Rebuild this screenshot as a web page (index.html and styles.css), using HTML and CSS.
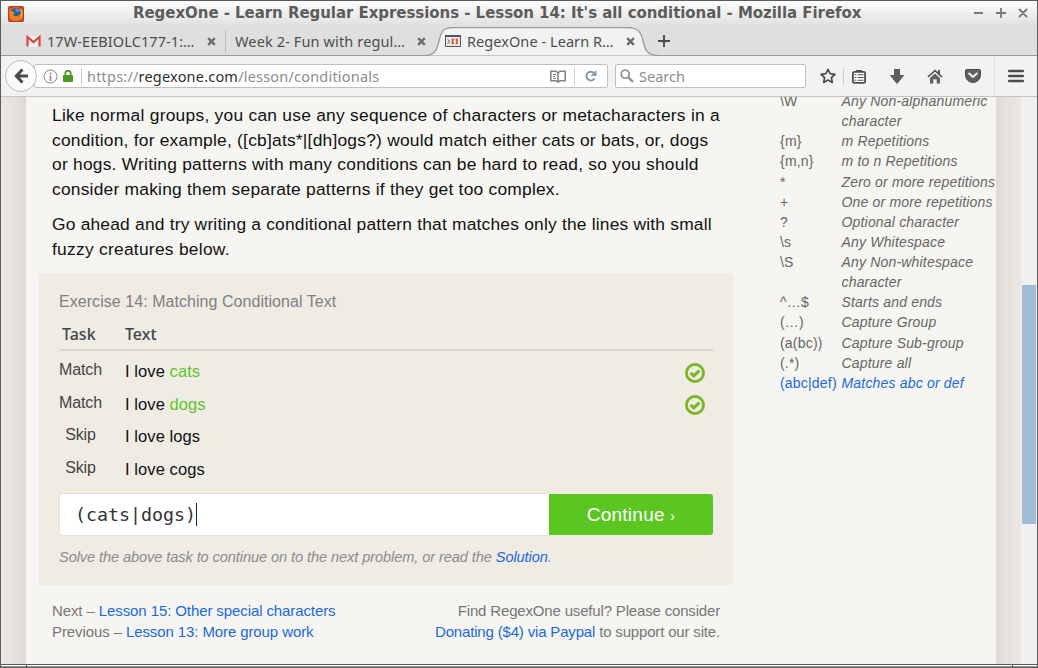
FILE: index.html
```html
<!DOCTYPE html>
<html lang="en">
<head>
<meta charset="utf-8">
<title>RegexOne - Learn Regular Expressions - Lesson 14: It's all conditional</title>
<link rel="stylesheet" href="styles.css">
</head>
<body>
<div class="window">
  <header class="titlebar">
    <svg class="app-icon" width="16" height="16" viewBox="0 0 16 16">
      <rect x=".5" y=".5" width="15" height="15" rx="1" fill="#c94f20" stroke="#a8401e"/>
      <path d="M1 3 8 1l7 2v10l-5 2H4l-3-3z" fill="#e8681c"/>
      <circle cx="8" cy="7.5" r="5.6" fill="#275f9c"/>
      <path d="M8 2.500c2 0 4 1.500 4.500 3L9 6 7 4z" fill="#4a9ed6"/>
      <path d="M2 3c0 2 1 2 3 2.500L7 7 5 8.500c1 2 4 2.500 6 .5 2-1 2-4 1-6 3 2 3 8 0 10.500-3 2-8 1-10-2-1-3-1-6 0-8.500z" fill="#f08020"/>
      <path d="M12 2c3 3 3 7 1 10 0-3 1-6-1-10z" fill="#f8bc38"/>
    </svg>
    <h1 class="window-title">RegexOne - Learn Regular Expressions - Lesson 14: It's all conditional - Mozilla Firefox</h1>
    <svg class="window-controls" width="56" height="12" viewBox="0 0 56 12" fill="none" stroke="#777" stroke-width="1.8">
      <path d="M1 6h9M23 6h10M28 1v10M46 2l8 8M54 2l-8 8"/>
    </svg>
  </header>

  <nav class="tabs">
    <div class="tab tab-mail">
      <svg width="15" height="12" viewBox="0 0 15 12"><path d="M1 1h13v11H1z" fill="#eee"/><path d="M1.500 11.500V2l6 5 6-5v9.500" fill="none" stroke="#d5473c" stroke-width="2.200"/></svg>
      <span class="tab-label">17W-EEBIOLC177-1:…</span>
      <svg class="tab-close" width="9" height="9" viewBox="0 0 9 9"><path d="m1.200 1.200 6.600 6.600m0-6.600-6.600 6.600"/></svg>
    </div>
    <div class="tab tab-week">
      <span class="tab-label">Week 2- Fun with regul…</span>
      <svg class="tab-close" width="9" height="9" viewBox="0 0 9 9"><path d="m1.200 1.200 6.600 6.600m0-6.600-6.600 6.600"/></svg>
    </div>
    <div class="tab tab-active">
      <svg class="tab-shape" width="236" height="29" viewBox="0 0 236 29"><path d="M0 28.500C11 28.500 13 23 15 14S19 .5 29 .5H204c10 0 13 4.500 15 13.500s4 14.500 16 14.500" fill="#f2f2f2" stroke="#999b9e" stroke-width="1.300"/></svg>
      <svg class="tab-icon" width="16" height="12" viewBox="0 0 16 12"><path d="M.5.500h15v11H.5z" fill="#e9e9e9" stroke="#4e555e"/><path d="M0 1h16" stroke="#4e555e" stroke-width="2"/><path d="m3 4.500 1.500 2L3 8.500" fill="none" stroke="#555"/><path d="M9 4.500H7.500v4H9M10.500 4.500H12v4h-1.500" fill="none" stroke="#d2572a" stroke-width="1.700"/></svg>
      <span class="tab-label">RegexOne - Learn R…</span>
      <svg class="tab-close" width="9" height="9" viewBox="0 0 9 9"><path d="m1.200 1.200 6.600 6.600m0-6.600-6.600 6.600"/></svg>
    </div>
    <svg class="new-tab" width="12" height="12" viewBox="0 0 12 12"><path d="M6 0v12M0 6h12" stroke="#4c4c4c" stroke-width="1.900"/></svg>
  </nav>

  <div class="toolbar">
    <div class="back">
      <svg width="14" height="16" viewBox="0 0 14 16" fill="none" stroke="#4a4a4a" stroke-width="3"><path d="M8.500 1.500 2.300 8l6.200 6.500M2.500 8H14"/></svg>
    </div>
    <div class="address">
      <svg width="15" height="15" viewBox="0 0 15 15"><circle cx="7.500" cy="7.500" r="6.500" fill="none" stroke="#8a8a8a"/><path d="M7.500 3.500v2M7.500 6.500V12" stroke="#8a8a8a" stroke-width="1.600"/></svg>
      <svg class="lock" width="10" height="12" viewBox="0 0 10 12"><path d="M2.300 6V3.500a2.700 2.700 0 0 1 5.400 0V6" fill="none" stroke="#4a9a26" stroke-width="1.700"/><rect y="5" width="10" height="7" rx=".8" fill="#4a9a26"/></svg>
      <span class="divider"></span>
      <span class="url">https://<b>regexone.com</b>/lesson/conditionals</span>
      <svg class="reader" width="16" height="13" viewBox="0 0 16 13" fill="none" stroke="#858585" stroke-width="1.600"><path d="M.8 1.300H6L8 2.800l2-1.500h5.200v9.400H10l-2 1.500-2-1.500H.8zM8 3v9"/><path d="M3 4.500h3M3 6.500h2M3 8.500h3" stroke-width="1"/></svg>
      <span class="divider"></span>
      <svg class="reload" width="12" height="12" viewBox="0 0 12 12"><path d="M9.500 8.500A4.400 4.400 0 1 1 9 3" fill="none" stroke="#8b98a5" stroke-width="2"/><path d="M11.500 0v6h-6z" fill="#8b98a5"/></svg>
    </div>
    <div class="search">
      <svg width="14" height="14" viewBox="0 0 14 14" fill="none" stroke="#929292"><circle cx="5.200" cy="5.200" r="4" stroke-width="1.800"/><path d="m8.200 8.200 4.800 4.800" stroke-width="2.400"/></svg>
      <span>Search</span>
    </div>
    <div class="actions">
      <svg width="16" height="16" viewBox="0 0 16 16"><path d="m8 1.300 2.100 4.400 4.900.6-3.600 3.300.9 4.800L8 12.100l-4.300 2.300.9-4.800L1 6.300l4.900-.6z" fill="none" stroke="#4c4c4c" stroke-width="1.700" stroke-linejoin="round"/></svg>
      <span class="divider"></span>
      <svg class="list" width="14" height="15" viewBox="0 0 14 15"><path d="M4 3V1h6v2" fill="#555"/><rect x=".9" y="2.900" width="12.200" height="11" rx="1.500" fill="#fff" stroke="#4c4c4c" stroke-width="1.800"/><path d="M2.500 5.800h1.800M2.500 8.500h1.800M2.500 11.200h1.800M5.500 5.800h6M5.500 8.500h6M5.500 11.200h6" stroke="#4c4c4c" stroke-width="1.100"/></svg>
      <svg class="download" width="14" height="15" viewBox="0 0 14 15"><path d="M4.500.5h5v6h4L7 14.500.5 6.500h4z" fill="#606060" stroke="#444" stroke-width=".8"/></svg>
      <svg class="home" width="16" height="15" viewBox="0 0 16 15"><path d="M11 1h2v4h-2z" fill="#555"/><path d="m1 8 7-6.500L15 8" fill="none" stroke="#4c4c4c" stroke-width="1.600"/><path d="m3 9 5-4.600L13 9v5.500H9.700v-4.300H6.300v4.300H3z" fill="#606060"/></svg>
      <svg class="pocket" width="16" height="14" viewBox="0 0 16 14"><path d="M1.500.5h13q1 0 1 1V6a7.500 7.500 0 0 1-15 0V1.500q0-1 1-1z" fill="#606060" stroke="#484848"/><path d="M4.200 4.500 8 8l3.800-3.500" fill="none" stroke="#f2f2f2" stroke-width="2" stroke-linecap="round"/></svg>
      <span class="menu-line"></span>
      <svg class="menu" width="16" height="14" viewBox="0 0 16 14"><path d="M1.300 2h13.400M1.300 7h13.400M1.300 12h13.400" stroke="#4c4c4c" stroke-width="2.700" stroke-linecap="round"/></svg>
    </div>
  </div>

  <div class="viewport">
    <div class="edge edge-left"></div>
    <main class="lesson">
      <p class="prose">
        <span class="l1">Like normal groups, you can use any sequence of characters or metacharacters in a</span>
        <span class="l2">condition, for example, ([cb]ats*|[dh]ogs?) would match either cats or bats, or, dogs</span>
        <span class="l3">or hogs. Writing patterns with many conditions can be hard to read, so you should</span>
        <span class="l4">consider making them separate patterns if they get too complex.</span>
      </p>
      <p class="prose">
        <span class="l5">Go ahead and try writing a conditional pattern that matches only the lines with small</span>
        <span class="l6">fuzzy creatures below.</span>
      </p>

      <section class="exercise">
        <h2 class="exercise-title">Exercise 14: Matching Conditional Text</h2>
        <div class="task-head"><span>Task</span><span>Text</span></div>
        <div class="tasks">
          <div class="task"><span class="kind">Match</span><span class="sample">I love <em>cats</em></span><svg class="check" width="20" height="20" viewBox="0 0 20 20" fill="none" stroke="#7bb526"><circle cx="10" cy="10" r="8.600" stroke-width="2.800"/><path d="m5.800 9.800 3 3 5.500-5.200" stroke-width="3.200"/></svg></div>
          <div class="task"><span class="kind">Match</span><span class="sample">I love <em>dogs</em></span><svg class="check" width="20" height="20" viewBox="0 0 20 20" fill="none" stroke="#7bb526"><circle cx="10" cy="10" r="8.600" stroke-width="2.800"/><path d="m5.800 9.800 3 3 5.500-5.200" stroke-width="3.200"/></svg></div>
          <div class="task"><span class="kind">Skip</span><span class="sample">I love logs</span></div>
          <div class="task"><span class="kind">Skip</span><span class="sample">I love cogs</span></div>
        </div>
        <div class="answer">
          <div class="answer-input">(cats|dogs)<i class="caret"></i></div>
          <a class="continue">Continue <small>›</small></a>
        </div>
        <p class="hint">Solve the above task to continue on to the next problem, or read the <a>Solution</a>.</p>
      </section>

      <footer class="footer">
        <div><div class="next">Next – <a>Lesson 15: Other special characters</a></div><div class="prev">Previous – <a>Lesson 13: More group work</a></div></div>
        <div class="support"><div>Find RegexOne useful? Please consider</div><div><a>Donating ($4) via Paypal</a> to support our site.</div></div>
      </footer>
    </main>

    <aside class="reference">
      <dl>
        <dt>\W</dt><dd>Any Non-alphanumeric<br>character</dd>
        <dt>{m}</dt><dd>m Repetitions</dd>
        <dt>{m,n}</dt><dd>m to n Repetitions</dd>
        <dt>*</dt><dd>Zero or more repetitions</dd>
        <dt>+</dt><dd>One or more repetitions</dd>
        <dt>?</dt><dd>Optional character</dd>
        <dt>\s</dt><dd>Any Whitespace</dd>
        <dt>\S</dt><dd>Any Non-whitespace<br>character</dd>
        <dt>^…$</dt><dd>Starts and ends</dd>
        <dt>(…)</dt><dd>Capture Group</dd>
        <dt>(a(bc))</dt><dd>Capture Sub-group</dd>
        <dt>(.*)</dt><dd>Capture all</dd>
        <dt class="current">(abc|def)</dt><dd class="current">Matches abc or def</dd>
      </dl>
    </aside>
    <div class="edge edge-right"></div>
    <div class="scrollbar"><div class="thumb"></div></div>
  </div>
  <div class="resize-bar"><span></span><span></span><span></span></div>
</div>
</body>
</html>
```
FILE: styles.css
```css
* { box-sizing: border-box; }
body { margin: 0; font-family: "Liberation Sans", Arial, sans-serif; }
svg { display: block; flex: none; }
p, h1, h2, dl, dd { margin: 0; font-weight: normal; }

.window {
  width: 1038px; height: 668px; overflow: hidden;
  display: flex; flex-direction: column;
  border: 1px solid #5b5b5b; border-bottom: 0;
  background: #f2f2f2; white-space: nowrap;
}

/* Title bar */
.titlebar {
  height: 26px; flex: none; display: flex; align-items: center;
  padding: 0 8px 0 7px;
  background: linear-gradient(#fdfdfd, #dfdfdf);
}
.window-title {
  flex: 1; padding-left: 3px; text-align: left; margin: -2px 0 0 106px;
  font: bold 15px/24px "DejaVu Sans", sans-serif; color: #5c5c5c; letter-spacing: -.05px;
}
.window-controls { margin-top: -3px; }

/* Tabs */
.tabs {
  height: 29px; flex: none; display: flex; position: relative;
  background: #dfdfdf; border-bottom: 1px solid #9a9a9a;
  font: 14.5px/28px "Noto Sans", sans-serif; color: #4d4d4d;
}
.tab { display: flex; align-items: center; height: 28px; position: relative; }
.tab-mail { width: 225px; padding: 0 10px 0 25px; }
.tab-mail::after { content: ""; width: 1px; height: 22px; background: #bbb; margin: 0 -10px 0 9px; }
.tab-week { width: 206px; padding: 0 6px 0 9px; }
.tab-mail .tab-label { margin-left: 6px; letter-spacing: .08px; }
.tab-week .tab-label { letter-spacing: .13px; }
.tab-active { width: 236px; height: 29px; margin-left: -8px; padding: 0 25px 1px 21px; }
.tab-label { flex: 1; }
.tab-shape { position: absolute; left: 0; top: 0; }
.tab-icon, .tab-active .tab-label, .tab-active .tab-close { position: relative; }
.tab-active .tab-label { margin-left: 6px; letter-spacing: .06px; }
.tab-close path { stroke: #6c6c6c; stroke-width: 2.4; fill: none; }
.new-tab { margin: 8px 0 0 -2px; position: relative; }

/* Navigation toolbar */
.toolbar {
  height: 41px; flex: none; display: flex; align-items: center;
  border-bottom: 1px solid #c3c3c3; background: #f2f2f2;
  padding-left: 4px; font: 14.5px/22px "Noto Sans", sans-serif; color: #8d8d8d;
}
.back {
  width: 32px; height: 32px; flex: none; border: 1px solid #bdbdbd; border-radius: 50%;
  background: #fafafa; display: flex; align-items: center; justify-content: center;
  position: relative;
}
.address, .search {
  height: 24px; display: flex; align-items: center;
  background: #fff; border: 1px solid #bfbfbf; border-radius: 2px;
}
.address { width: 574px; margin-left: -3px; padding: 0 10px 0 8px; }
.divider { width: 1px; height: 17px; background: #cdcdcd; flex: none; }
.lock { margin: 0 8px 0 5px; }
.url { flex: 1; padding-left: 5px; letter-spacing: .2px; }
.url b { font-weight: normal; color: #2e2e2e; }
.reader { margin-right: 8px; }
.reload { margin-left: 10px; }
.search { width: 191px; margin-left: 7px; padding-left: 4px; gap: 5px; }
.actions { display: flex; align-items: center; flex: 1; height: 40px; padding-left: 14px; }
.actions .divider { margin: 0 8px 0 7px; }
.download { margin-left: 24px; }
.home { margin-left: 23px; }
.pocket { margin-left: 22px; }
.menu-line { width: 1px; height: 36px; background: #dedede; margin: 0 13px; }

/* Page */
.viewport { height: 567px; flex: none; display: flex; overflow: hidden; background: #f6f5f1; }
.edge { width: 25px; flex: none; }
.edge-left { background: linear-gradient(90deg, #ece6e3, #e5e0dd 60%, #ddd9d6); }
.edge-right { background: linear-gradient(90deg, #dfdbd8, #e6e1de 45%, #ece6e3); }
.lesson { width: 728px; flex: none; padding: 6px 0 0 26px; }
.prose { font-size: 17.4px; line-height: 24.6px; color: #111; margin-bottom: 11px; }
.prose + .prose { margin-bottom: 0; }
.prose span { display: block; }
.l1 { letter-spacing: .25px; }
.l2 { letter-spacing: .22px; }
.l3 { letter-spacing: .23px; }
.l4 { letter-spacing: .22px; }
.l5 { letter-spacing: .2px; }
.l6 { letter-spacing: .26px; }
.exercise {
  width: 694px; height: 312px; margin: 11px 0 0 -13px; padding: 17px 19px 0 20px;
  background: #efece4; border-radius: 3px; color: #444;
}
.exercise-title { font-size: 16px; line-height: 23px; color: #808080; letter-spacing: .05px; }
.task-head {
  height: 38px; display: flex; border-bottom: 2px solid #dadada; padding: 9px 0 0 3px;
  font: 500 16px/24px "Noto Sans", sans-serif; color: #444;
}
.task-head span:first-child { width: 63px; }
.tasks { padding-top: 3.5px; }
.task { display: flex; height: 32.6px; align-items: flex-start; }
.kind { width: 43px; text-align: center; font-size: 16px; line-height: 31px; letter-spacing: -.1px; }
.sample { flex: 1; margin-left: 23px; font-size: 16.5px; line-height: 34px; color: #111; letter-spacing: .08px; }
.sample em { color: #5fc42c; font-style: normal; }
.check { margin: 8.6px 9px 0 0; }
.answer { display: flex; height: 43px; margin-top: 8.5px; }
.answer-input {
  width: 490px; border: 1px solid #e3e2d5; border-right: 0; border-radius: 3px 0 0 3px;
  background: #fff; padding: 1px 0 0 15px; display: flex; align-items: center;
  font: 18.3px/40px "DejaVu Sans Mono", monospace; color: #333;
}
.caret { width: 1px; height: 23px; background: #222; }
.continue {
  width: 164px; height: 41px; margin-top: 1px; border-radius: 0 3px 3px 0;
  background: #5bc621; color: #fff; text-align: center; font-size: 19px; line-height: 41px;
  letter-spacing: .25px;
}
.continue small { font-size: 14px; }
.hint { margin-top: 10px; font-size: 14.6px; line-height: 22px; font-style: italic; color: #8b8b8b; letter-spacing: -.09px; }
a { color: #1c69dd; }
.footer {
  display: flex; justify-content: space-between; width: 668px; margin-top: 15px;
  font-size: 15px; line-height: 21px; color: #777; letter-spacing: -.1px;
}
.support { text-align: right; letter-spacing: -.17px; }

/* Pattern reference column */
.reference { width: 242px; flex: none; }
.reference dl {
  display: grid; grid-template-columns: 61.5px 1fr; padding-left: 26px; margin-top: -6px;
  font-size: 14px; line-height: 20.12px; color: #666;
}
.reference dt { letter-spacing: .2px; }
.reference dd { font-style: italic; letter-spacing: .18px; }
.reference .current { color: #1c69dd; }

.scrollbar { width: 16px; background: #f0f0f0; padding: 188px 1px 0; }
.thumb { height: 239px; background: #a2bcd6; }

.resize-bar {
  height: 4px; flex: none; display: grid; grid-template-columns: 25px 985px 1fr; gap: 1px;
  background: #5b5b5b; padding: 1px 0;
}
.resize-bar span { background: linear-gradient(#fff 50%, #999 50%); }
```
